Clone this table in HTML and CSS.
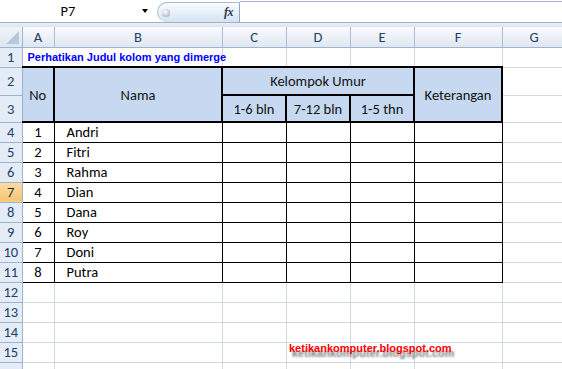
FILE: index.html
```html
<!DOCTYPE html>
<html>
<head>
<meta charset="utf-8">
<title>Kelompok Umur</title>
<link rel="stylesheet" href="styles.css">
</head>
<body>
<div class="fbar">
  <div class="namebox"><span class="nm">P7</span><span class="dd"></span></div>
  <div class="fxpill"><span class="knob"></span><span class="fx">fx</span></div>
  <div class="finput"></div>
</div>
<div class="band"></div>
<div class="sheet">
<table class="grid">
  <colgroup>
    <col class="c-h"><col class="c-a"><col class="c-b"><col class="c-n"><col class="c-n"><col class="c-n"><col class="c-f"><col class="c-n">
  </colgroup>
  <tr class="r-ch">
    <th class="corner"><span class="tri"></span></th>
    <th class="ch">A</th><th class="ch">B</th><th class="ch">C</th><th class="ch">D</th><th class="ch">E</th><th class="ch">F</th><th class="ch">G</th>
  </tr>
  <tr class="r-n">
    <th class="rh">1</th>
    <td colspan="2" class="title">Perhatikan Judul kolom yang dimerge</td>
    <td></td><td></td><td></td><td></td><td></td>
  </tr>
  <tr class="r-2">
    <th class="rh">2</th>
    <td rowspan="2" class="hd hd-first">No</td>
    <td rowspan="2" class="hd">Nama</td>
    <td colspan="3" class="hd">Kelompok Umur</td>
    <td rowspan="2" class="hd">Keterangan</td>
    <td></td>
  </tr>
  <tr class="r-3">
    <th class="rh">3</th>
    <td class="hd">1-6 bln</td>
    <td class="hd">7-12 bln</td>
    <td class="hd">1-5 thn</td>
    <td></td>
  </tr>
  <tr class="r-n"><th class="rh">4</th><td class="b b-no">1</td><td class="b b-nm">Andri</td><td class="b"></td><td class="b"></td><td class="b"></td><td class="b"></td><td></td></tr>
  <tr class="r-n"><th class="rh">5</th><td class="b b-no">2</td><td class="b b-nm">Fitri</td><td class="b"></td><td class="b"></td><td class="b"></td><td class="b"></td><td></td></tr>
  <tr class="r-n"><th class="rh">6</th><td class="b b-no">3</td><td class="b b-nm">Rahma</td><td class="b"></td><td class="b"></td><td class="b"></td><td class="b"></td><td></td></tr>
  <tr class="r-n"><th class="rh rh-sel">7</th><td class="b b-no">4</td><td class="b b-nm">Dian</td><td class="b"></td><td class="b"></td><td class="b"></td><td class="b"></td><td></td></tr>
  <tr class="r-n"><th class="rh">8</th><td class="b b-no">5</td><td class="b b-nm">Dana</td><td class="b"></td><td class="b"></td><td class="b"></td><td class="b"></td><td></td></tr>
  <tr class="r-n"><th class="rh">9</th><td class="b b-no">6</td><td class="b b-nm">Roy</td><td class="b"></td><td class="b"></td><td class="b"></td><td class="b"></td><td></td></tr>
  <tr class="r-n"><th class="rh">10</th><td class="b b-no">7</td><td class="b b-nm">Doni</td><td class="b"></td><td class="b"></td><td class="b"></td><td class="b"></td><td></td></tr>
  <tr class="r-n"><th class="rh">11</th><td class="b b-no">8</td><td class="b b-nm">Putra</td><td class="b"></td><td class="b"></td><td class="b"></td><td class="b"></td><td></td></tr>
  <tr class="r-n"><th class="rh">12</th><td></td><td></td><td></td><td></td><td></td><td></td><td></td></tr>
  <tr class="r-n"><th class="rh">13</th><td></td><td></td><td></td><td></td><td></td><td></td><td></td></tr>
  <tr class="r-n"><th class="rh">14</th><td></td><td></td><td></td><td></td><td></td><td></td><td></td></tr>
  <tr class="r-n"><th class="rh">15</th><td></td><td></td><td></td><td></td><td></td><td></td><td></td></tr>
  <tr class="r-n"><th class="rh"></th><td></td><td></td><td></td><td></td><td></td><td></td><td></td></tr>
</table>
</div>
<div class="watermark">ketikankomputer.blogspot.com</div>
</body>
</html>
```
FILE: styles.css
```css
html, body {
  margin: 0;
  padding: 0;
}
body {
  width: 562px;
  height: 369px;
  overflow: hidden;
  position: relative;
  background: #fff;
  font-family: Carlito, Calibri, Lato, "Liberation Sans", sans-serif;
  color: #000;
}

/* formula bar */
.fbar {
  display: flex;
  height: 22px;
  border-bottom: 1px solid #9cb1cb;
  background: #fff;
}
.namebox {
  width: 157px;
  display: flex;
  align-items: center;
}
.nm {
  width: 136px;
  text-align: center;
  font-size: 14.5px;
  color: #000;
}
.dd {
  margin-left: 6px;
  width: 0;
  height: 0;
  border-left: 3px solid transparent;
  border-right: 3px solid transparent;
  border-top: 4px solid #000;
}
.fxpill {
  box-sizing: border-box;
  width: 83px;
  height: 20px;
  margin-top: 2px;
  border: 1px solid #a8bbd4;
  border-right-color: #8ea6c4;
  border-bottom: none;
  border-radius: 10px 0 0 10px;
  background: linear-gradient(#fbfdff 0%, #eaf1fa 45%, #d5e2f2 100%);
  display: flex;
  align-items: center;
}
.knob {
  width: 8px;
  height: 8px;
  margin-left: 4px;
  border-radius: 50%;
  background: radial-gradient(circle at 40% 35%, #ffffff 0%, #cfd6df 45%, #8e9bab 100%);
}
.fx {
  margin-left: auto;
  margin-right: 6px;
  font-family: "Liberation Serif", "Times New Roman", serif;
  font-style: italic;
  font-weight: bold;
  font-size: 12px;
  color: #27384f;
  letter-spacing: -0.5px;
}
.finput {
  flex: 1;
  margin-top: 1px;
  border-top: 1px solid #a2b5cd;
  background: #fff;
}
.band {
  height: 4px;
  background: linear-gradient(#e9eef5, #dfe6ef);
}

/* sheet grid */
.sheet {
  width: 562px;
  overflow: hidden;
}
.grid {
  border-collapse: collapse;
  table-layout: fixed;
  width: 566px;
}
.c-h { width: 22px; }
.c-a { width: 32px; }
.c-b { width: 168px; }
.c-n { width: 64px; }
.c-f { width: 88px; }

.grid td, .grid th {
  padding: 0;
  box-sizing: border-box;
  font-size: 14.5px;
  line-height: 16px;
  font-weight: normal;
  vertical-align: middle;
  white-space: nowrap;
}
.grid td {
  border-right: 1px solid #d0d7e5;
  border-bottom: 1px solid #d0d7e5;
}

.r-ch { height: 20px; }
.r-n { height: 20px; }
.r-2 { height: 28px; }
.r-3 { height: 27px; }

.ch {
  background: linear-gradient(#f8fafd 0%, #edf1f7 50%, #dfe6f0 100%);
  border-right: 1px solid #a9bdd5;
  border-bottom: 1px solid #9eb3cd;
  color: #22406a;
  text-align: center;
}
.corner {
  position: relative;
  background: linear-gradient(#f1f4f9, #dfe6ef);
  border-right: 1px solid #9eb3cd;
  border-bottom: 1px solid #9eb3cd;
}
.tri {
  position: absolute;
  right: 3px;
  bottom: 3px;
  width: 0;
  height: 0;
  border-left: 13px solid transparent;
  border-bottom: 13px solid #b7c7dc;
}
.rh {
  background: #e4ecf7;
  border-right: 1px solid #9eb3cd;
  border-bottom: 1px solid #9eb3cd;
  color: #22406a;
  text-align: center;
}
.rh-sel {
  background: linear-gradient(#fbdca4, #f6c474);
  color: #2b2a26;
}

.grid td.title {
  font-family: "Liberation Sans", Arial, sans-serif;
  font-weight: bold;
  font-size: 11px;
  color: #0000ff;
  padding-left: 5px;
  overflow: visible;
}

.hd {
  background: #c6d9f1;
  text-align: center;
  color: #111;
}
.grid td.hd {
  border: 2px solid #000;
}
.grid td.hd-first {
  border-left: none;
}

.grid td.b {
  border: 1px solid #000;
}
.grid td.b-no {
  border-left: none;
  text-align: center;
}
.grid td.b-nm {
  padding-left: 12px;
}

.watermark {
  position: absolute;
  left: 289px;
  top: 342px;
  font-family: "Liberation Sans", Arial, sans-serif;
  font-weight: bold;
  font-size: 11px;
  line-height: 13px;
  color: #ff0000;
  text-shadow: 3px 5px 2px rgba(50, 50, 50, 0.6);
}
```
